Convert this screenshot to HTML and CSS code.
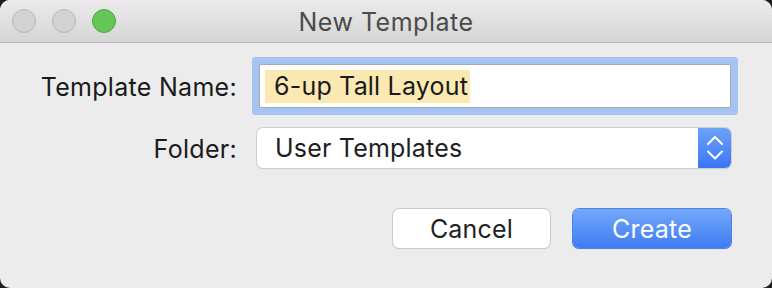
FILE: index.html
```html
<!DOCTYPE html>
<html lang="en">
<head>
  <meta charset="UTF-8" />
  <title>New Template</title>
  <link rel="stylesheet" href="styles.css">
</head>
<body>
  <div class="window">
    <div class="titlebar">
      <div class="lights">
        <span class="light"></span>
        <span class="light"></span>
        <span class="light green"></span>
      </div>
      <div class="title">New Template</div>
    </div>

    <div class="content">
      <div class="form">
        <label class="label">Template Name:</label>
        <div class="field"><span class="selected">6-up Tall Layout</span></div>

        <label class="label">Folder:</label>
        <div class="popup">
          <span class="popup-text">User Templates</span>
          <span class="stepper">
            <svg width="18" height="40" viewBox="0 0 18 40">
              <path d="M2 16 L9 9 L16 16" fill="none" stroke="#fff" stroke-width="2" stroke-linecap="round" stroke-linejoin="round"/>
              <path d="M2 23.5 L9 30.5 L16 23.5" fill="none" stroke="#fff" stroke-width="2" stroke-linecap="round" stroke-linejoin="round"/>
            </svg>
          </span>
        </div>
      </div>

      <div class="buttons">
        <button class="btn">Cancel</button>
        <button class="btn primary">Create</button>
      </div>
    </div>
  </div>
</body>
</html>
```

FILE: styles.css
```css
html, body {
  margin: 0;
  padding: 0;
  background: #1c1c1c;
}

body {
  font-family: Inter, "Noto Sans", sans-serif;
  color: #1e1e1e;
  letter-spacing: 0.2px;
}

.window {
  width: 772px;
  height: 288px;
  background: #ececec;
  border-radius: 10px;
  overflow: hidden;
}

.titlebar {
  position: relative;
  height: 42px;
  background: linear-gradient(#ebebeb, #d5d5d5);
  border-bottom: 1px solid #b9b9b9;
  display: flex;
  align-items: center;
  justify-content: center;
}

.lights {
  position: absolute;
  left: 12px;
  top: 9px;
  display: flex;
  gap: 16px;
}

.light {
  width: 22px;
  height: 22px;
  border-radius: 50%;
  background: #d3d3d3;
  border: 1px solid #b7b7b7;
}

.light.green {
  background: #63c656;
  border-color: #4ea93f;
}

.title {
  font-size: 25px;
  letter-spacing: 0.5px;
  color: #4b4b4b;
  padding-top: 1px;
}

.content {
  padding: 21px 41px 0 0;
}

.form {
  display: grid;
  grid-template-columns: 237px 474px;
  column-gap: 20px;
  row-gap: 20px;
  align-items: center;
}

.label {
  text-align: right;
  font-size: 25px;
  letter-spacing: 0.3px;
  color: #1a1a1a;
  padding-top: 2px;
}

.field {
  margin-left: 2px;
  height: 42px;
  background: #fff;
  border: 1px solid #a9a9a9;
  box-shadow: 0 0 0 7px #a5c3f3;
  border-radius: 1px;
  display: flex;
  align-items: center;
  padding-left: 5px;
  font-size: 25px;
  color: #1a1a1a;
}

.selected {
  background: #fbe9b2;
  line-height: 33px;
  padding: 0 2px 0 9px;
}

.popup {
  height: 40px;
  display: flex;
  align-items: stretch;
  background: #fff;
  border-radius: 6px;
  box-shadow: 0 0 0 1px #cfcfcf, 0 1px 1px rgba(0,0,0,0.2);
}

.popup-text {
  flex: 1;
  display: flex;
  align-items: center;
  padding-left: 18px;
  font-size: 25px;
  color: #1e1e1e;
}

.stepper {
  width: 33px;
  background: linear-gradient(#6da2f8, #3a76f4);
  border-radius: 0 6px 6px 0;
  display: flex;
  align-items: center;
  justify-content: center;
}

.buttons {
  display: flex;
  justify-content: flex-end;
  gap: 23px;
  margin-top: 41px;
}

.btn {
  font-family: inherit;
  letter-spacing: 0.2px;
  height: 39px;
  width: 157px;
  font-size: 25px;
  color: #222;
  background: #fff;
  border: none;
  border-radius: 6px;
  box-shadow: 0 0 0 1px #cbcbcb, 0 1px 1px rgba(0,0,0,0.15);
  padding: 0;
}

.btn.primary {
  width: 158px;
  color: #fff;
  background: linear-gradient(#74a8f8, #3e7cf5);
  box-shadow: 0 0 0 1px #4a82ec, 0 1px 1px rgba(0,0,0,0.15);
}
```
